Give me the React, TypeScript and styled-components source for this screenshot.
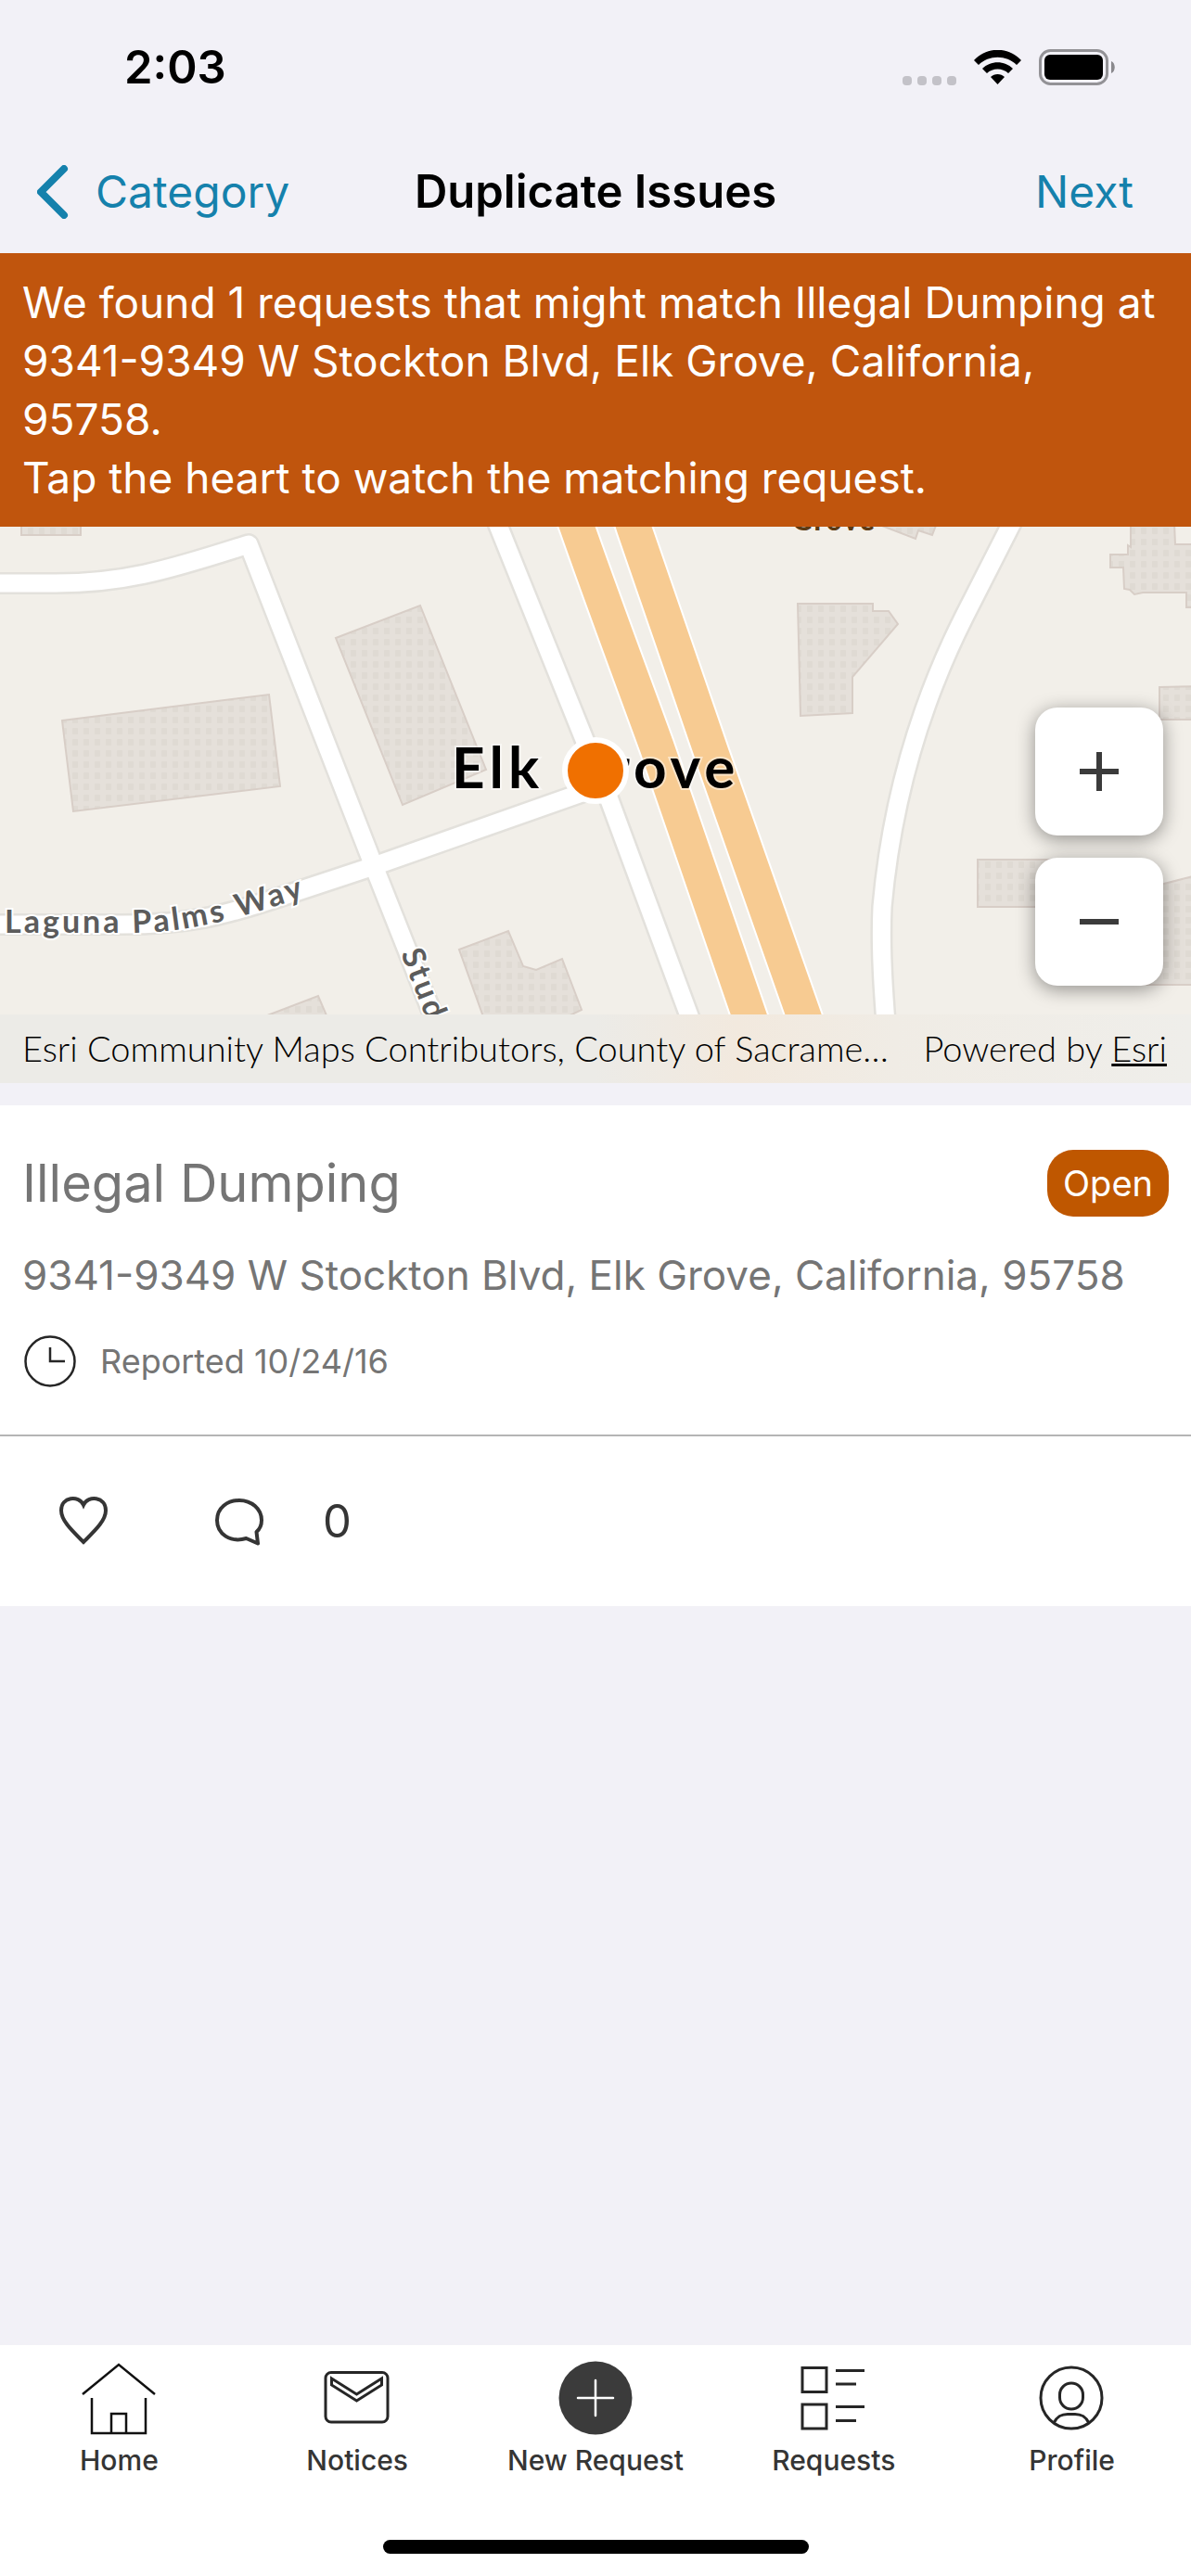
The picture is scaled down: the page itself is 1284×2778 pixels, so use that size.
import React from "react";
import styled, { createGlobalStyle } from "styled-components";

const colors = {
  page: "#f2f1f7",
  link: "#1581ac",
  banner: "#c0550d",
  badge: "#bf5700",
  muted: "#757575",
  ink: "#353535",
  line: "#b5b5b5",
};

const GlobalStyle = createGlobalStyle`
  *, *::before, *::after { box-sizing: border-box; }
  body {
    margin: 0;
    background: ${colors.page};
    font-family: Inter, "Liberation Sans", sans-serif;
  }
  button { font: inherit; color: inherit; background: none; border: 0; padding: 0; }
  h1, h2, p { margin: 0; font-weight: 400; }
  svg { display: block; flex: none; }
`;

const Screen = styled.div`
  min-height: 100vh;
  display: flex;
  flex-direction: column;
`;

const StatusBar = styled.div`
  height: 145px;
  padding: 0 82px 0 134px;
  display: flex;
  align-items: center;
  justify-content: space-between;
`;

const Clock = styled.time`
  font-size: 49px;
  font-weight: 600;
  line-height: 60px;
`;

const StatusIcons = styled.div`
  display: flex;
  align-items: center;
  gap: 19px;
`;

const SignalDots = styled.div`
  display: flex;
  gap: 6px;
  align-self: flex-end;
`;

const SignalDot = styled.i`
  width: 10px;
  height: 10px;
  border-radius: 4px;
  background: #c3c2c8;
`;

const NavBar = styled.header`
  height: 128px;
  padding: 0 40px 4px;
  display: grid;
  grid-template-columns: 1fr auto 1fr;
  align-items: center;
`;

const NavTitle = styled.h1`
  font-size: 49px;
  line-height: 60px;
  && { font-weight: 600; }
`;

const NavButton = styled.button<{ $end?: boolean }>`
  display: flex;
  align-items: center;
  gap: 29px;
  justify-self: ${(p) => (p.$end ? "end" : "start")};
  && {
    padding-right: ${(p) => (p.$end ? "22px" : "0")};
    color: ${colors.link};
    font-size: 48px;
    line-height: 60px;
  }
`;

const Banner = styled.section`
  padding: 22px 24px 21px;
  background: ${colors.banner};
  color: #fff;
  font-size: 46px;
  line-height: 63px;
`;

const MapPanel = styled.section`
  position: relative;
  height: 600px;
  display: flex;
  flex-direction: column;
  justify-content: flex-end;
  overflow: hidden;
  background: #f2efe9;
`;

const MapCanvas = styled.svg`
  position: absolute;
  inset: 0;
  width: 100%;
  height: 100%;
  font-family: Lato, "Open Sans", sans-serif;
`;

const ZoomControls = styled.div`
  position: relative;
  align-self: flex-end;
  display: flex;
  flex-direction: column;
  gap: 24px;
  padding: 0 30px 31px 0;
`;

const ZoomButton = styled.button`
  width: 138px;
  height: 138px;
  display: grid;
  place-items: center;
  border-radius: 24px;
  box-shadow: 0 4px 20px rgba(0, 0, 0, 0.4);
  && { background: #fff; }
`;

const Attribution = styled.div`
  position: relative;
  height: 74px;
  padding: 0 26px 2px 24px;
  display: flex;
  align-items: center;
  justify-content: space-between;
  background: linear-gradient(90deg, #ecebe7 0%, #ecebe7 50%, #f2e9de 62%, #f0ece5 75%, #efeeea 100%);
  font-family: Lato, "Open Sans", sans-serif;
  font-size: 38px;
  font-weight: 300;
  line-height: 48px;
  white-space: nowrap;
`;

const EsriLink = styled.a`
  color: inherit;
  text-decoration: underline;
`;

const Card = styled.article`
  margin-top: 24px;
  background: #fff;
  color: ${colors.muted};
`;

const CardBody = styled.div`
  padding: 40px 24px 49px;
  border-bottom: 2px solid ${colors.line};
`;

const CardHeader = styled.div`
  display: flex;
  align-items: center;
  justify-content: space-between;
  height: 88px;
`;

const CardTitle = styled.h2`
  font-size: 56px;
  line-height: 72px;
`;

const Badge = styled.span`
  padding: 12px 17px;
  border-radius: 28px;
  background: ${colors.badge};
  color: #fff;
  font-size: 38px;
  line-height: 48px;
`;

const Address = styled.p`
  padding-top: 25px;
  font-size: 44px;
  line-height: 60px;
`;

const Reported = styled.p`
  padding-top: 33px;
  display: flex;
  align-items: center;
  gap: 24px;
  font-size: 36px;
  line-height: 60px;
`;

const CardActions = styled.div`
  height: 183px;
  padding-left: 60px;
  display: flex;
  align-items: center;
  gap: 108px;
  color: ${colors.ink};
`;

const ActionButton = styled.button`
  display: flex;
  align-items: center;
  gap: 60px;
  && {
    font-size: 49px;
    line-height: 60px;
  }
`;

const TabBar = styled.nav`
  margin-top: auto;
  padding-top: 17px;
  background: #fff;
  color: ${colors.ink};
`;

const Tabs = styled.div`
  display: grid;
  grid-template-columns: repeat(5, 1fr);
`;

const Tab = styled.button`
  display: flex;
  flex-direction: column;
  align-items: center;
  gap: 9px;
  && {
    font-size: 30px;
    font-weight: 500;
    line-height: 36px;
  }
`;

const HomeIndicator = styled.div`
  width: 459px;
  height: 15px;
  margin: 68px auto 24px;
  border-radius: 8px;
  background: #000;
`;

const buildings = [
  "23,-4 23,9 87,9 87,-4",
  "67,209 290,181 302,280 79,307",
  "362,120 453,85 524,262 434,300",
  "495,456 548,436 564,474 578,478 606,466 627,521 600,534 523,534",
  "270,534 343,506 355,534",
  "860,83 941,83 941,91 958,91 968,105 919,162 919,201 863,204",
  "943,-4 987,13 990,4 1005,9 1010,-4",
  "1219,-4 1219,22 1216,20 1216,30 1197,30 1197,44 1211,44 1212,67 1218,68 1223,73 1232,71 1279,71 1279,87 1290,87 1290,19 1267,19 1266,-4",
  "1250,173 1290,172 1290,208 1250,208",
  "1054,359 1140,359 1140,410 1054,410",
  "1220,394 1290,376 1290,494 1220,494",
];

const streets = [
  "M-10 61 H60 C130 61 175 49 268 19 L403 366 L480 560",
  "M528 -24 L633 237 L656 292 L755 560",
  "M-10 429 H123 C200 430 240 420 300 400 L403 366 L650 279",
  "M1100 -22 L1040 96 C985 205 960 310 951 410 C949 455 952 500 957 560",
];

const highways = [
  "M614 -22 L622 0 C650 80 680 160 708 237 L819 560",
  "M676 -22 L683 0 C712 85 740 165 768 247 L878 560",
];

function StreetMap() {
  return (
    <MapCanvas viewBox="0 0 1284 600" preserveAspectRatio="xMidYMin slice" role="img" aria-label="Map of Elk Grove">
      <defs>
        <pattern id="dots" width="12" height="12" patternUnits="userSpaceOnUse">
          <rect width="12" height="12" fill="#e5e0da" />
          <rect x="6" y="1" width="6" height="7" rx="1" fill="#dfdad3" />
        </pattern>
        <path id="laguna" d="M5 438 H123 C200 439 240 429 380 382" />
        <path id="stud" d="M432 460 L480 583" />
      </defs>
      {buildings.map((points) => (
        <polygon key={points} points={points} fill="url(#dots)" stroke="#d8cec7" strokeWidth="2" />
      ))}
      <g fill="none" strokeLinejoin="round">
        {streets.map((d) => (
          <path key={d} d={d} stroke="#e3e1dc" strokeWidth="24" />
        ))}
        {streets.map((d) => (
          <path key={d} d={d} stroke="#fff" strokeWidth="19" />
        ))}
        {highways.map((d) => (
          <path key={d} d={d} stroke="#fff" strokeWidth="41" />
        ))}
        {highways.map((d) => (
          <path key={d} d={d} stroke="#f7cb92" strokeWidth="37" />
        ))}
      </g>
      <g fontWeight="700" fill="#5c5c5c" stroke="#fff" strokeWidth="4" paintOrder="stroke" fontSize="34" letterSpacing="3">
        <text>
          <textPath href="#laguna">Laguna Palms Way</textPath>
        </text>
        <text>
          <textPath href="#stud">Stud</textPath>
        </text>
      </g>
      <text x="854" y="4" fontSize="30" fontWeight="900" letterSpacing="2" fill="#5b3a14">
        Grove
      </text>
      <text x="487" y="282" fontSize="62" fontWeight="700" letterSpacing="5" stroke="#fff" strokeOpacity="0.5" strokeWidth="4" paintOrder="stroke">
        Elk Grove
      </text>
      <circle cx="642" cy="263" r="33" fill="#f07000" stroke="#fff" strokeWidth="6" />
    </MapCanvas>
  );
}

function WifiIcon() {
  return (
    <svg width="51" height="38" viewBox="0 0 51 38">
      <path d="M0 11 C14 -4 37 -4 51 11 L46 16 C35 5 16 5 5 16 Z" />
      <path d="M9 20 C18 11 33 11 42 20 L37 25 C31 19 20 19 14 25 Z" />
      <path d="M18 29 C22 25 29 25 33 29 L25.500 37 Z" />
    </svg>
  );
}

function BatteryIcon() {
  return (
    <svg width="82" height="39" viewBox="0 0 82 39">
      <rect x="1.500" y="1.500" width="72" height="36" rx="11" fill="none" stroke="#939296" strokeWidth="3" />
      <rect x="6" y="6" width="63" height="27" rx="6" />
      <path d="M78 13 C83 15 83 24 78 26 Z" fill="#8a898d" />
    </svg>
  );
}

function HomeIcon() {
  return (
    <svg width="80" height="80" viewBox="0 0 80 80" fill="none" stroke="#111" strokeWidth="2.500">
      <path d="M1 36 L40 4 L79 36" />
      <path d="M11 40 V78 H69 V40" />
      <path d="M32 78 V57 H48 V78" />
    </svg>
  );
}

function NoticesIcon() {
  return (
    <svg width="80" height="80" viewBox="0 0 80 80" fill="none" stroke="#262626" strokeWidth="3">
      <rect x="6" y="12.500" width="67" height="53.500" rx="6" />
      <path d="M12.500 19 L39.500 36 L66.500 19 V26 L39.500 43 L12.500 26 Z" />
    </svg>
  );
}

function NewRequestIcon() {
  return (
    <svg width="80" height="80" viewBox="0 0 80 80">
      <circle cx="40" cy="40" r="39.500" fill="#3b3b3b" />
      <path d="M21 40 H59 M40 21 V59" stroke="#fff" strokeWidth="2.500" strokeLinecap="round" />
    </svg>
  );
}

function RequestsIcon() {
  return (
    <svg width="80" height="80" viewBox="0 0 80 80" fill="none" stroke="#262626" strokeWidth="3">
      <rect x="6" y="7.500" width="26" height="26" />
      <rect x="6" y="47" width="26" height="26" />
      <path d="M42 10.500 H73 M42 25 H64 M42 49.500 H73 M42 64.500 H64" />
    </svg>
  );
}

function ProfileIcon() {
  return (
    <svg width="80" height="80" viewBox="0 0 80 80" fill="none" stroke="#262626" strokeWidth="3">
      <circle cx="39" cy="40" r="33" />
      <rect x="26.500" y="24" width="25" height="28" rx="12.500" />
      <path d="M20 67 C24 59 29 57.500 35 57.500 H43 C49 57.500 54 59 58 67" />
    </svg>
  );
}

const tabs = [
  { label: "Home", Icon: HomeIcon },
  { label: "Notices", Icon: NoticesIcon },
  { label: "New Request", Icon: NewRequestIcon },
  { label: "Requests", Icon: RequestsIcon },
  { label: "Profile", Icon: ProfileIcon },
];

export default function App() {
  return (
    <Screen>
      <GlobalStyle />
      <StatusBar>
        <Clock>2:03</Clock>
        <StatusIcons>
          <SignalDots>
            <SignalDot />
            <SignalDot />
            <SignalDot />
            <SignalDot />
          </SignalDots>
          <WifiIcon />
          <BatteryIcon />
        </StatusIcons>
      </StatusBar>
      <NavBar>
        <NavButton type="button">
          <svg width="34" height="58" viewBox="0 0 34 58" fill="none" stroke="currentColor" strokeWidth="8" strokeLinecap="round" strokeLinejoin="round">
            <path d="M29 4 L4 29 L29 54" />
          </svg>
          Category
        </NavButton>
        <NavTitle>Duplicate Issues</NavTitle>
        <NavButton type="button" $end>
          Next
        </NavButton>
      </NavBar>
      <main>
        <Banner>
          <p>We found 1 requests that might match Illegal Dumping at 9341-9349 W Stockton Blvd, Elk Grove, California, 95758.</p>
          <p>Tap the heart to watch the matching request.</p>
        </Banner>
        <MapPanel>
          <StreetMap />
          <ZoomControls>
            <ZoomButton type="button" aria-label="Zoom in">
              <svg width="42" height="42" viewBox="0 0 42 42" stroke="#3b3b3b" strokeWidth="6">
                <path d="M0 21 H42 M21 0 V42" />
              </svg>
            </ZoomButton>
            <ZoomButton type="button" aria-label="Zoom out">
              <svg width="42" height="42" viewBox="0 0 42 42" stroke="#3b3b3b" strokeWidth="6">
                <path d="M0 21 H42" />
              </svg>
            </ZoomButton>
          </ZoomControls>
          <Attribution>
            <span>Esri Community Maps Contributors, County of Sacrame…</span>
            <span>
              Powered by <EsriLink href="#esri">Esri</EsriLink>
            </span>
          </Attribution>
        </MapPanel>
        <Card>
          <CardBody>
            <CardHeader>
              <CardTitle>Illegal Dumping</CardTitle>
              <Badge>Open</Badge>
            </CardHeader>
            <Address>9341-9349 W Stockton Blvd, Elk Grove, California, 95758</Address>
            <Reported>
              <svg width="60" height="60" viewBox="0 0 60 60" fill="none" stroke="#262626" strokeWidth="2.500">
                <circle cx="30" cy="30" r="26.500" />
                <path d="M30 15 V30 H46" />
              </svg>
              Reported 10/24/16
            </Reported>
          </CardBody>
          <CardActions>
            <ActionButton type="button" aria-label="Watch request">
              <svg width="60" height="60" viewBox="0 0 60 60" fill="none" stroke="currentColor" strokeWidth="4">
                <path d="M30 52 C18 40 6 29 6 18 C6 3 25 1 30 12 C35 1 54 3 54 18 C54 29 42 40 30 52 Z" />
              </svg>
            </ActionButton>
            <ActionButton type="button" aria-label="Comments">
              <svg width="60" height="60" viewBox="0 0 60 60" fill="none" stroke="currentColor" strokeWidth="4" strokeLinejoin="round">
                <path d="M48.500 41 L50 53.500 L37.500 48 C20 53 6 43 6 28.500 C6 15 17 7 30 7 C43 7 54 16 54 28.500 C54 33 52 38 48.500 41 Z" />
              </svg>
              <span>0</span>
            </ActionButton>
          </CardActions>
        </Card>
      </main>
      <TabBar>
        <Tabs>
          {tabs.map(({ label, Icon }) => (
            <Tab type="button" key={label}>
              <Icon />
              {label}
            </Tab>
          ))}
        </Tabs>
        <HomeIndicator />
      </TabBar>
    </Screen>
  );
}
